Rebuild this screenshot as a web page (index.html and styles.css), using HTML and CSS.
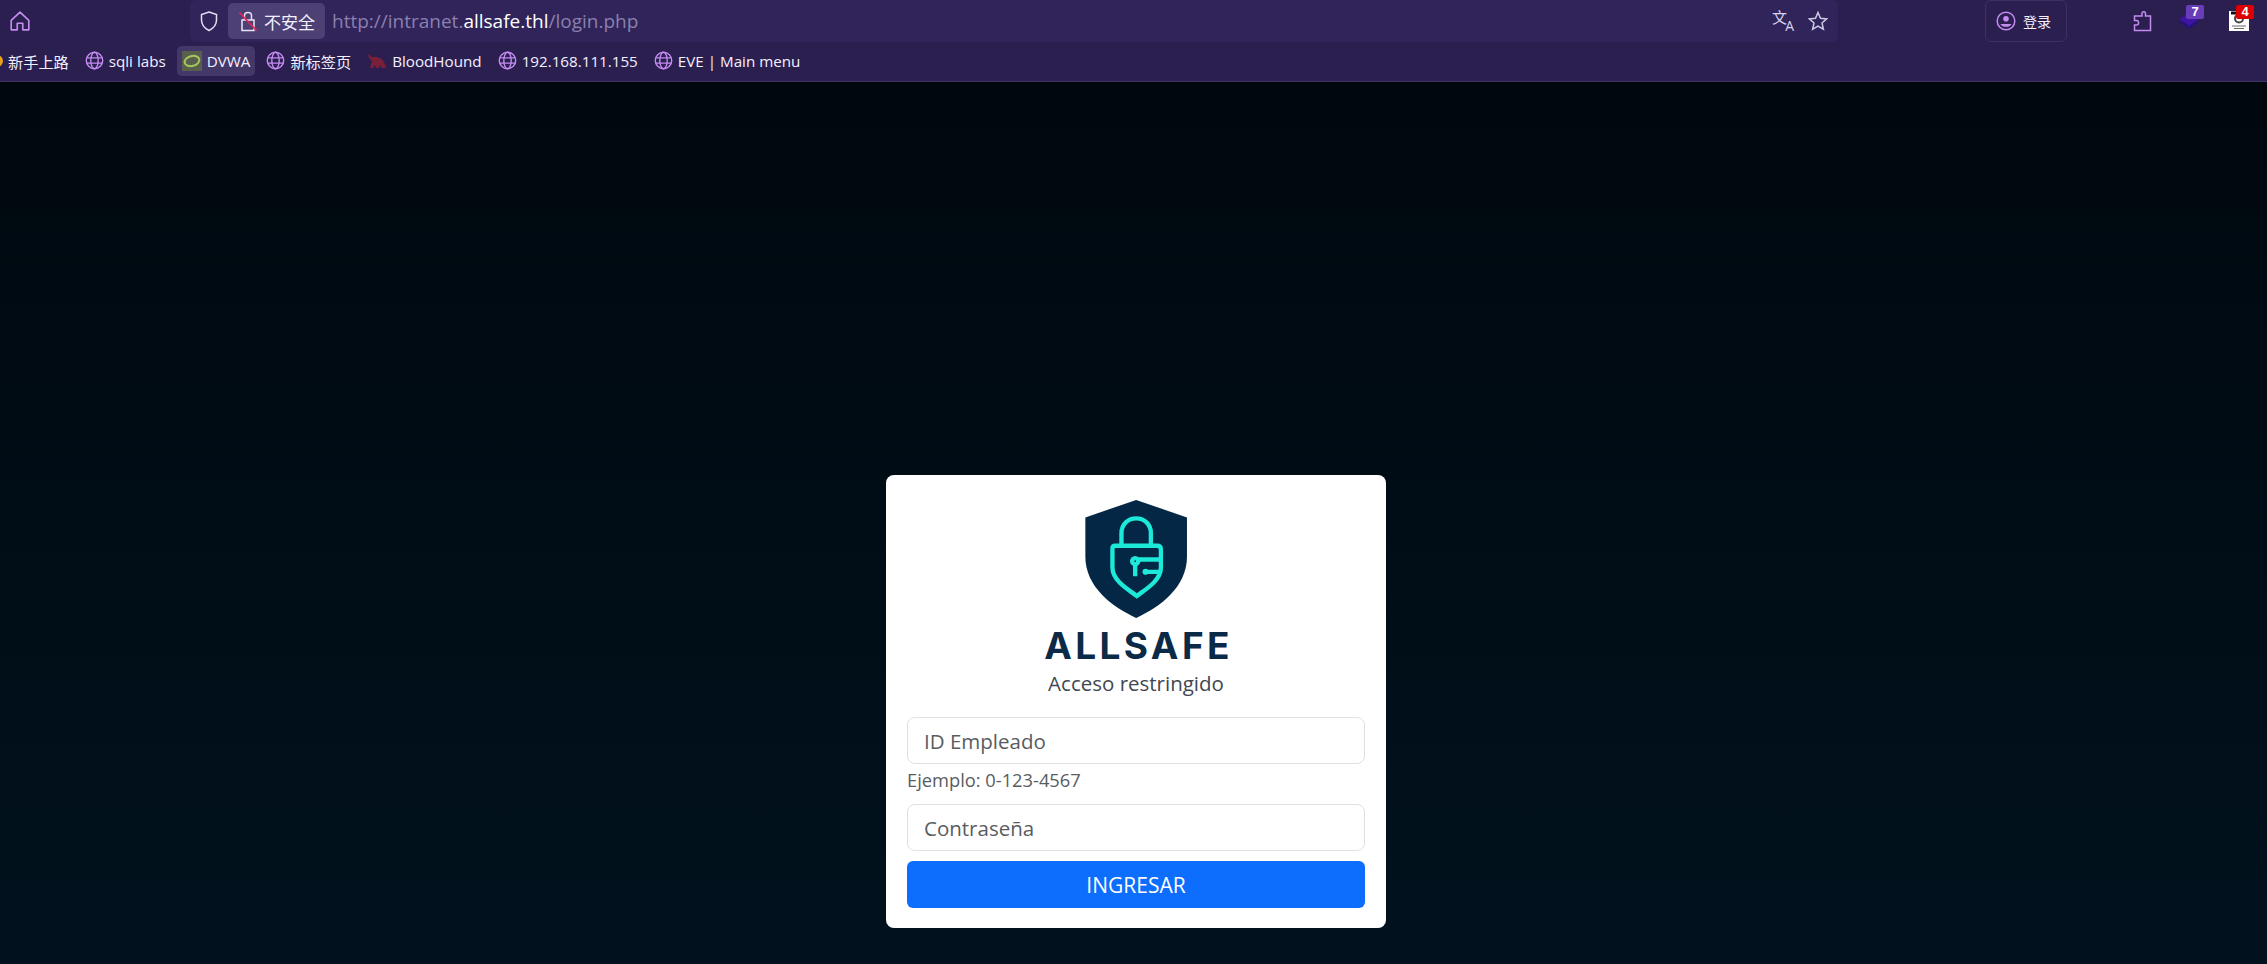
FILE: index.html
```html
<!DOCTYPE html>
<html lang="es">
<head>
  <meta charset="UTF-8">
  <meta name="viewport" content="width=device-width, initial-scale=1.0">
  <title>Allsafe Intranet</title>
  <link rel="stylesheet" href="styles.css">
</head>
<body>

<header class="chrome">
  <div class="toolbar">
    <svg class="home-icon" viewBox="0 0 20 20"><path d="M2 9.500 10 2 18 9.500V18H12.500V12H7.500V18H2Z" stroke-linejoin="round"/></svg>
    <div class="address-bar">
      <svg class="shield-icon" viewBox="0 0 20 22"><path d="M10 2 17.500 4.500V10C17.500 15 14 18.500 10 20.500 6 18.500 2.500 15 2.500 10V4.500Z"/></svg>
      <div class="security-chip">
        <svg class="lock-icon" viewBox="0 0 18 22">
          <path class="lock-body" d="M3 10H15V20.500H3ZM5.500 10V5.500C5.500 1.500 12.500 1.500 12.500 5.500V10"/>
          <path class="lock-slash" d="M0.500 2.500 17.500 20.500"/>
        </svg>
        <span>不安全</span>
      </div>
      <div class="url">http://intranet.<b>allsafe.thl</b>/login.php</div>
      <div class="address-actions">
        <span class="translate-icon"><i>文</i><em>A</em></span>
        <svg class="star-icon" viewBox="0 0 20 20"><path d="M10 1.500 12.500 7.300 18.700 7.900 14 12 15.400 18.200 10 15 4.600 18.200 6 12 1.300 7.900 7.500 7.300Z"/></svg>
      </div>
    </div>
    <div class="signin">
      <svg class="avatar-icon" viewBox="0 0 20 20">
        <circle class="ring" cx="10" cy="10" r="8.800"/>
        <circle class="fill" cx="10" cy="7.800" r="2.800"/>
        <path class="fill" d="M4.500 13H15.500C14 16.800 6 16.800 4.500 13Z"/>
      </svg>
      <span>登录</span>
    </div>
    <div class="extensions">
      <svg class="puzzle-icon" viewBox="0 0 20 22"><path d="M6.500 6H10V3.500C10 1 13.500 1 13.500 3.500V6H18.500V20.500H2.500V15H4.500C7.300 15 7.300 10.500 4.500 10.500H2.500V6Z"/></svg>
      <div class="ext ext-layers">
        <svg class="layers-icon" viewBox="0 0 20 20">
          <path class="layer-back" d="M0.500 11 10 4 19.500 11 10 18Z"/>
          <path class="layer-front" d="M0.500 8 10 1 19.500 8 10 15Z"/>
        </svg>
        <span class="badge badge-purple">7</span>
      </div>
      <div class="ext ext-qr">
        <svg class="qr-icon" viewBox="0 0 20 20">
          <rect width="20" height="20" fill="#fff"/>
          <path d="M2 2H7M13 2H18" stroke="#111" stroke-width="3"/>
          <circle cx="10" cy="7.500" r="4" fill="none" stroke="#444" stroke-width="2"/>
          <path d="M3 15H17M5 17.500H15" stroke="#666" stroke-width="1.200"/>
        </svg>
        <span class="badge badge-red">4</span>
      </div>
    </div>
  </div>

  <nav class="bookmarks">
    <div class="bookmark"><span class="orange-dot"></span>新手上路</div>
    <div class="bookmark"><svg class="globe" viewBox="0 0 18 18"><use href="#globe"/></svg>sqli labs</div>
    <div class="bookmark active">
      <svg class="dvwa-icon" viewBox="0 0 20 20">
        <rect width="20" height="20" fill="#58604d"/>
        <ellipse cx="10" cy="10" rx="7.500" ry="5" fill="none" stroke="#a8c45e" stroke-width="2" transform="rotate(-15 10 10)"/>
      </svg>
      DVWA
    </div>
    <div class="bookmark"><svg class="globe" viewBox="0 0 18 18"><use href="#globe"/></svg>新标签页</div>
    <div class="bookmark">
      <svg class="hound-icon" viewBox="0 0 20 16"><path d="M1 1 5 4 10 4C15 5 18 9 19 15H15L13 12 12 15H9L8 12 6 15H3L5 8 2 5Z"/></svg>
      BloodHound
    </div>
    <div class="bookmark"><svg class="globe" viewBox="0 0 18 18"><use href="#globe"/></svg>192.168.111.155</div>
    <div class="bookmark"><svg class="globe" viewBox="0 0 18 18"><use href="#globe"/></svg>EVE | Main menu</div>
  </nav>
</header>

<svg class="defs" width="0" height="0">
  <symbol id="globe" viewBox="0 0 18 18">
    <circle cx="9" cy="9" r="7.800"/>
    <ellipse cx="9" cy="9" rx="3.500" ry="7.800"/>
    <path d="M1.500 6.500H16.500M1.500 11.500H16.500"/>
  </symbol>
</svg>

<main class="page">
  <section class="login-card">
    <svg class="logo" viewBox="255 60 305 353">
      <path class="logo-shield" d="M408 60 560 112V230C560 320 480 380 408 413 336 380 256 320 256 230V112Z"/>
      <g class="logo-lines">
        <path d="M364 195V160C364 100 452 100 452 160V195"/>
        <path d="M345 197H471Q482 197 482 208V262C482 300 440 325 410 347 380 325 337 300 337 262V205Q337 197 345 197Z"/>
        <circle cx="405" cy="243" r="9"/>
        <path d="M405 252V288M414 238H482M436 275H482"/>
      </g>
      <circle class="logo-dot" cx="436" cy="275" r="9"/>
    </svg>
    <div class="brand">ALLSAFE</div>
    <p class="tagline">Acceso restringido</p>
    <form class="login-form">
      <input class="field" type="text" placeholder="ID Empleado">
      <small class="hint">Ejemplo: 0-123-4567</small>
      <input class="field field-password" type="password" placeholder="Contraseña">
      <button class="submit" type="button">INGRESAR</button>
    </form>
  </section>
</main>

</body>
</html>
```

FILE: styles.css
```css
* {
  box-sizing: border-box;
}
html, body {
  height: 100%;
}
body {
  margin: 0;
  display: flex;
  flex-direction: column;
  overflow: hidden;
  font-family: "Open Sans", "Noto Sans CJK SC", sans-serif;
  background: #00080e;
}

/* browser chrome */
.chrome {
  flex: none;
  height: 82px;
  background: #2b1f50;
  border-bottom: 1px solid #3f3468;
  color: #f4f0ff;
}
.toolbar {
  display: flex;
  align-items: center;
  height: 42px;
}
.home-icon {
  width: 22px;
  height: 22px;
  margin-left: 9px;
  fill: none;
  stroke: #c48cf0;
  stroke-width: 1.500;
}
.address-bar {
  display: flex;
  align-items: center;
  width: 1648px;
  height: 42px;
  margin-left: 159px;
  padding-left: 9px;
  background: #30245b;
  border-radius: 6px;
}
.shield-icon {
  width: 20px;
  height: 22px;
  fill: none;
  stroke: #e3dff0;
  stroke-width: 1.500;
}
.security-chip {
  display: flex;
  align-items: center;
  gap: 7px;
  height: 36px;
  margin-left: 9px;
  padding: 0 10px 0 11px;
  background: #4c4074;
  border-radius: 5px;
  font-size: 17px;
}
.lock-icon {
  width: 18px;
  height: 22px;
  fill: none;
}
.lock-body {
  stroke: #e8e4f5;
  stroke-width: 1.500;
}
.lock-slash {
  stroke: #e0245e;
  stroke-width: 1.800;
}
.url {
  margin-left: 7px;
  font-size: 19px;
  color: #8b80ad;
}
.url b {
  font-weight: 400;
  color: #fff;
}
.address-actions {
  display: flex;
  align-items: center;
  gap: 15px;
  margin-left: auto;
  padding-right: 10px;
}
.translate-icon {
  position: relative;
  width: 20px;
  height: 22px;
  color: #d8d2ec;
}
.translate-icon i {
  position: absolute;
  left: -1px;
  top: -1px;
  font-style: normal;
  font-size: 15px;
  line-height: 17px;
}
.translate-icon em {
  position: absolute;
  right: -1px;
  bottom: 0;
  font-style: normal;
  font-size: 14px;
  line-height: 13px;
}
.star-icon {
  width: 20px;
  height: 20px;
  fill: none;
  stroke: #cdc7e4;
  stroke-width: 1.500;
}
.signin {
  display: flex;
  align-items: center;
  gap: 7px;
  width: 82px;
  height: 42px;
  margin-left: 147px;
  padding-left: 10px;
  border: 1px solid #3d3163;
  border-radius: 6px;
  font-size: 14px;
}
.avatar-icon {
  width: 20px;
  height: 20px;
  flex: none;
}
.avatar-icon .ring {
  fill: none;
  stroke: #c48cf0;
  stroke-width: 1.500;
}
.avatar-icon .fill {
  fill: #c48cf0;
}
.extensions {
  display: flex;
  align-items: center;
  margin-left: 65px;
}
.puzzle-icon {
  width: 20px;
  height: 22px;
  fill: none;
  stroke: #c48cf0;
  stroke-width: 1.500;
}
.ext {
  position: relative;
  width: 20px;
  height: 20px;
}
.ext-layers {
  margin-left: 27px;
}
.ext-qr {
  margin-left: 30px;
}
.layer-back {
  fill: #26127a;
}
.layer-front {
  fill: #3e14a0;
}
.layers-icon, .qr-icon {
  display: block;
  width: 20px;
  height: 20px;
}
.badge {
  position: absolute;
  top: -6px;
  left: 7px;
  width: 18px;
  height: 14px;
  border-radius: 2px;
  color: #fff;
  font: 700 13px/14px "Liberation Sans", sans-serif;
  text-align: center;
}
.badge-purple {
  background: #6a3db8;
}
.badge-red {
  background: #dc0000;
}
.bookmarks {
  display: flex;
  align-items: center;
  gap: 6px;
  height: 39px;
  margin-left: -14px;
  padding-bottom: 2px;
  font-size: 15.200px;
}
.bookmark {
  display: flex;
  align-items: center;
  gap: 5px;
  height: 30px;
  padding: 0 5px;
  border-radius: 5px;
  white-space: nowrap;
}
.bookmark.active {
  background: #443869;
}
.orange-dot {
  width: 12px;
  height: 12px;
  border-radius: 50%;
  background: #e8a020;
}
.globe {
  width: 19px;
  height: 19px;
  fill: none;
  stroke: #c48cf0;
  stroke-width: 1.300;
}
.dvwa-icon {
  width: 20px;
  height: 20px;
}
.hound-icon {
  width: 20px;
  height: 16px;
  fill: #7a1f3a;
}
.defs {
  position: absolute;
}

/* login page */
.page {
  flex: 1;
  display: flex;
  justify-content: center;
  align-items: flex-end;
  padding-bottom: 36px;
  background: linear-gradient(#00080e, #01121e);
}
.login-card {
  display: flex;
  flex-direction: column;
  align-items: center;
  width: 500px;
  height: 453px;
  margin-left: 5px;
  padding: 25px 21px 0;
  background: #fff;
  border-radius: 8px;
  color: #495057;
}
.logo {
  display: block;
  width: 102px;
  height: 118px;
  flex: none;
}
.logo-shield {
  fill: #042745;
}
.logo-lines {
  fill: none;
  stroke: #1de9d8;
  stroke-width: 13;
}
.logo-dot {
  fill: #1de9d8;
}
.brand {
  margin-top: 5px;
  padding-left: 5px;
  font-family: Inter, sans-serif;
  font-size: 37px;
  font-weight: 700;
  line-height: 45px;
  letter-spacing: 3.400px;
  color: #0a2a47;
}
.tagline {
  margin: 2px 0 21px;
  font-size: 20.500px;
  line-height: 26px;
  color: #3f4750;
}
.login-form {
  display: flex;
  flex-direction: column;
  width: 100%;
}
.field {
  height: 47px;
  padding: 0 16px;
  border: 1px solid #dee2e6;
  border-radius: 8px;
  font-family: inherit;
  font-size: 20.500px;
  color: #212529;
}
.field::placeholder {
  color: #595c5f;
  opacity: 1;
}
.hint {
  margin-top: 3px;
  font-size: 18.300px;
  line-height: 26px;
  color: #595c5f;
}
.field-password {
  margin-top: 11px;
}
.submit {
  height: 47px;
  margin-top: 10px;
  border: 0;
  border-radius: 6px;
  background: #0d6efd;
  color: #fff;
  font-family: inherit;
  font-size: 21px;
}
```
